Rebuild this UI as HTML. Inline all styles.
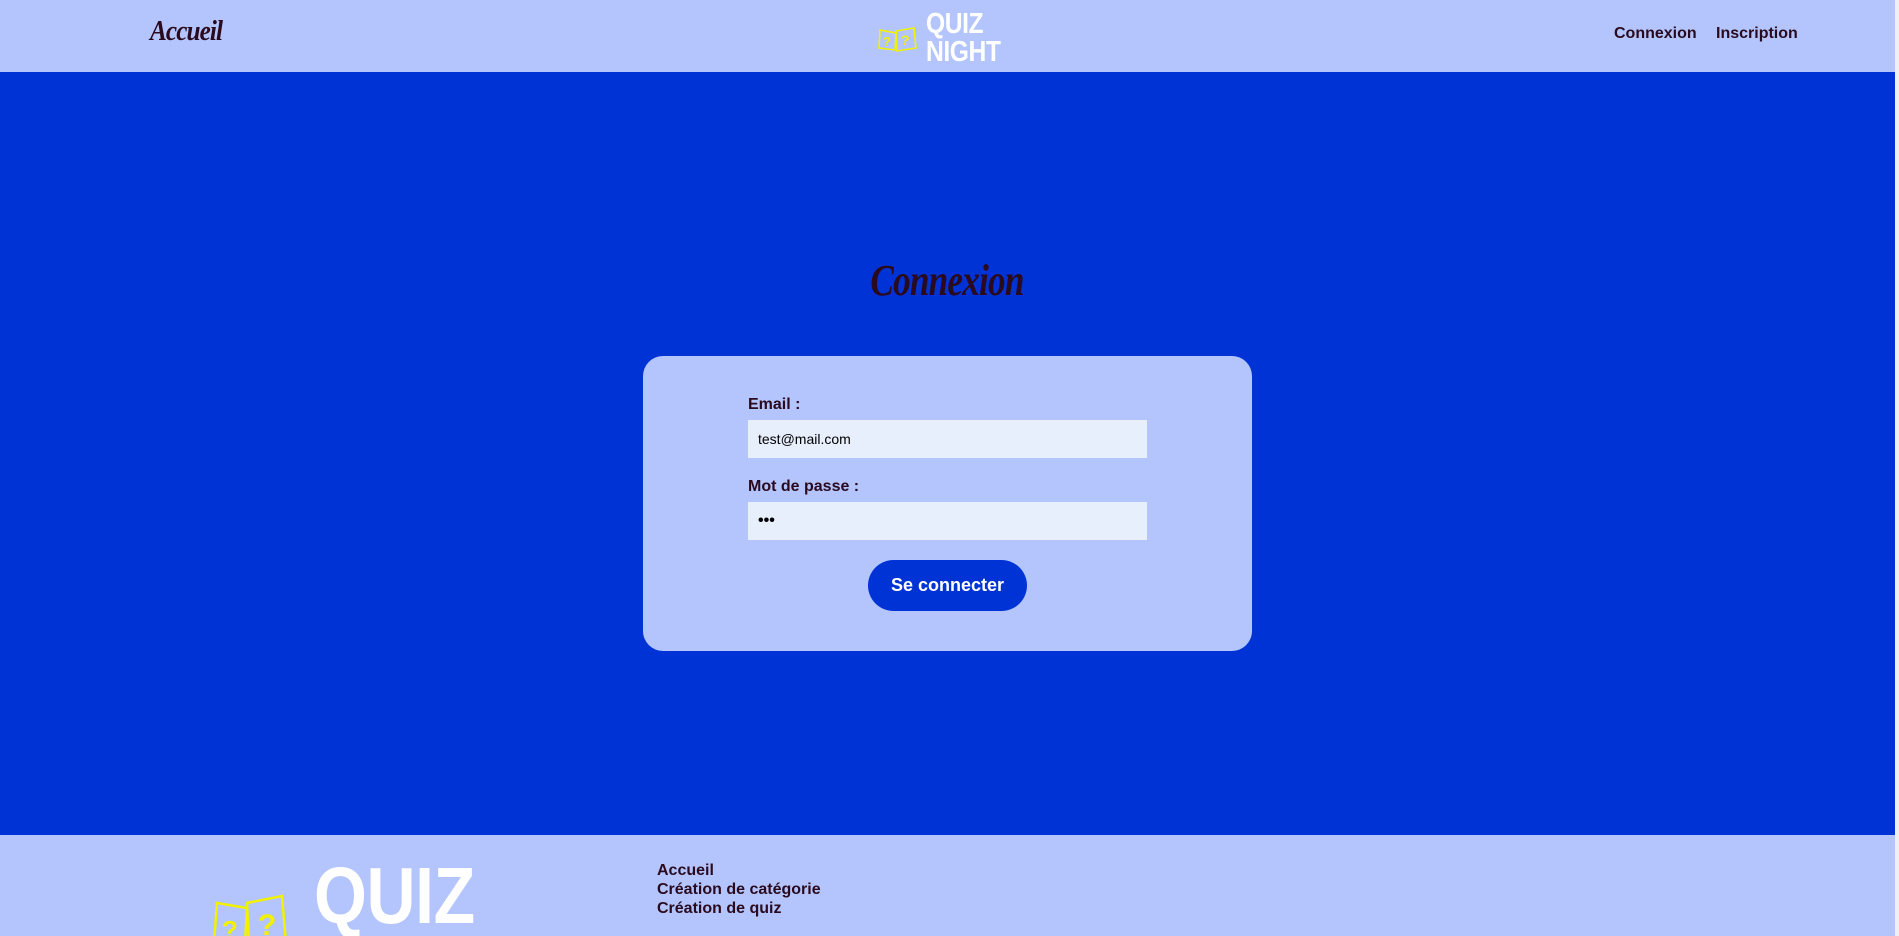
<!DOCTYPE html>
<html><head><meta charset="utf-8"><style>
*{margin:0;padding:0;box-sizing:border-box}
html,body{width:1899px;height:936px;overflow:hidden}
body{background:#0033d6;font-family:"Liberation Sans",Arial,sans-serif;color:#2a0a1e;position:relative}
header{position:absolute;left:0;top:0;width:1895px;height:72px;background:#b3c5fc}
.script{font-family:"Liberation Serif",serif;font-style:italic;font-weight:bold;color:#2a0a1e;letter-spacing:-1px}
.abs{position:absolute}
.nav{font-weight:bold;font-size:16px}
.logo{color:#fff;font-weight:bold;line-height:0.95;letter-spacing:-0.5px;transform-origin:left top}
.card{left:643px;top:356px;width:609px;height:295px;background:#b3c5fc;border-radius:20px}
label{position:absolute;font-weight:bold;font-size:16px}
.inp{position:absolute;left:748px;width:399px;height:38px;background:#e8effc;font-size:14px;padding-left:10px;line-height:38px;color:#000}
.btn{left:868px;top:560px;width:159px;height:51px;background:#0033d6;border-radius:26px;color:#fff;font-weight:bold;font-size:18px;text-align:center;line-height:51px}
footer{position:absolute;left:0;top:835px;width:1895px;height:101px;background:#b3c5fc;overflow:hidden}
.sb{position:absolute;right:0;top:0;width:4px;height:936px;background:#f0f0f0}
</style></head><body>
<header>
<div class="abs script" style="left:150px;top:16px;font-size:28px;transform:scaleX(0.9);transform-origin:left top">Accueil</div>
<svg class="abs" style="left:878px;top:26px" width="42" height="26" viewBox="0 0 42 26"><g fill="none" stroke="#f2f200" stroke-width="1.6"><path d="M2 4 L18 7 L17 24 L1 22 Z"/><path d="M18 5 L36 2 L38 22 L19 25 Z"/></g><text x="5" y="20" fill="#f2f200" font-size="13" font-weight="bold" font-family="Liberation Sans">?</text><text x="23" y="19" fill="#f2f200" font-size="14" font-weight="bold" font-family="Liberation Sans">?</text></svg>
<div class="abs logo" style="left:926px;top:11px;font-size:29px;transform:scaleX(0.85)">QUIZ<br>NIGHT</div>
<div class="abs nav" style="left:1614px;top:25px">Connexion</div>
<div class="abs nav" style="left:1716px;top:25px">Inscription</div>
</header>
<div class="abs script" style="left:847px;top:255px;font-size:44px;width:200px;text-align:center;transform:scaleX(0.8);transform-origin:center top">Connexion</div>
<div class="abs card"></div>
<label style="left:748px;top:396px">Email :</label>
<div class="inp" style="top:420px">test@mail.com</div>
<label style="left:748px;top:478px">Mot de passe :</label>
<div class="inp" style="top:502px;font-size:16px;font-weight:bold">•••</div>
<div class="abs btn">Se connecter</div>
<footer>
<svg class="abs" style="left:212px;top:58px" width="90" height="50" viewBox="0 0 90 50"><g fill="none" stroke="#f2f200" stroke-width="2.5"><path d="M5 10 L35 15 L33 50 L2 50 Z"/><path d="M35 10 L70 3 L74 50 L37 50 Z"/></g><text x="10" y="46" fill="#f2f200" font-size="26" font-weight="bold" font-family="Liberation Sans">?</text><text x="46" y="42" fill="#f2f200" font-size="30" font-weight="bold" font-family="Liberation Sans">?</text></svg>
<div class="abs logo" style="left:314px;top:26px;font-size:80px;line-height:0.88;transform:scaleX(0.85)">QUIZ<br>NIGHT</div>
<div class="abs nav" style="left:657px;top:26px;line-height:19px">Accueil<br>Création de catégorie<br>Création de quiz</div>
</footer>
<div class="sb"></div>
</body></html>
